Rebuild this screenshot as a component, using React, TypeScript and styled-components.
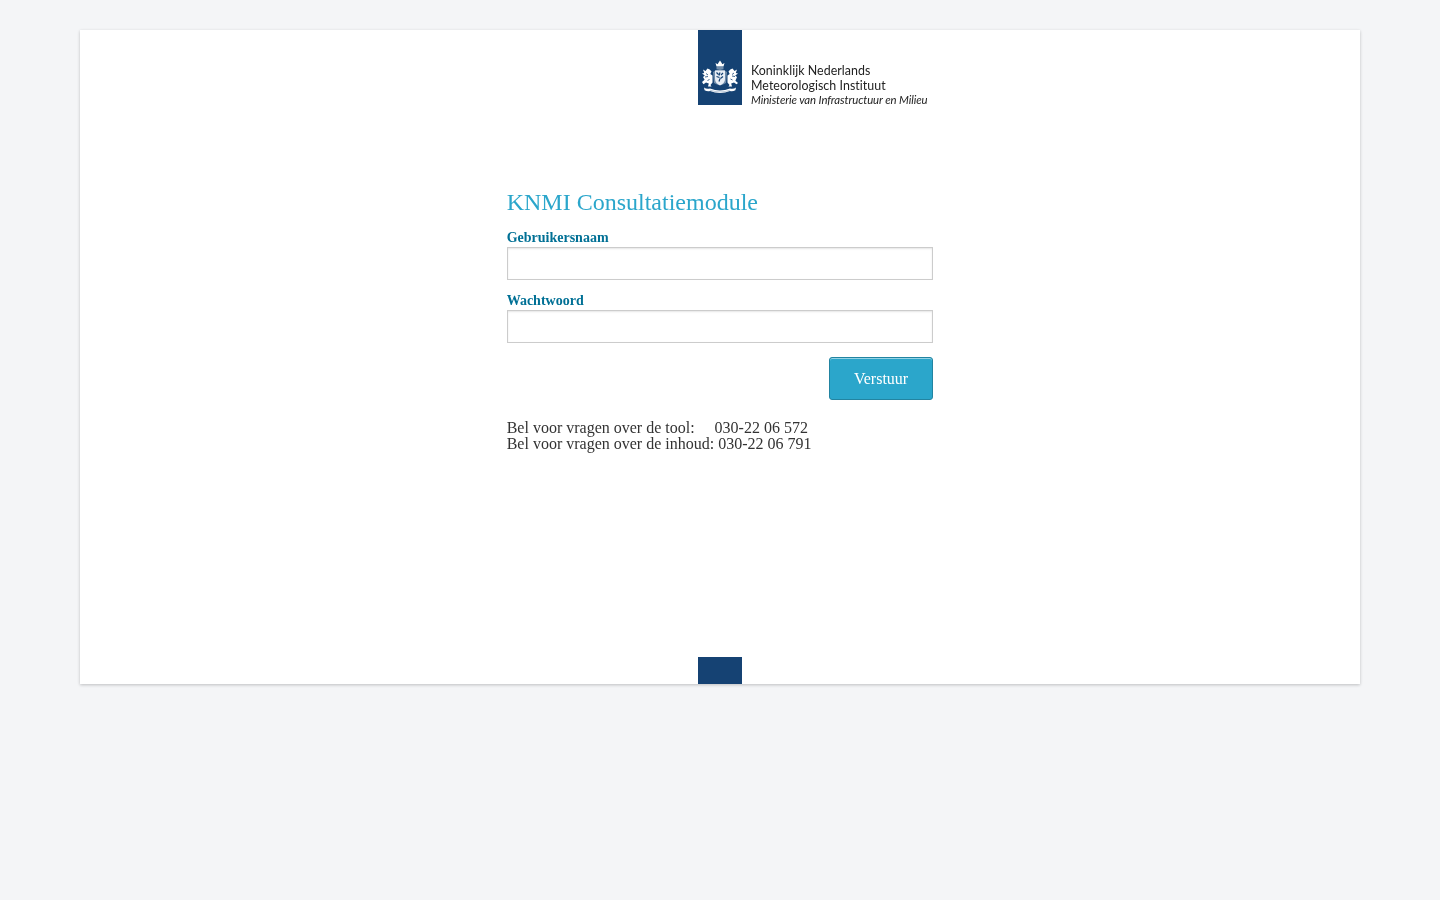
import React from "react";
import styled, { createGlobalStyle } from "styled-components";

const Global = createGlobalStyle`
  html, body { margin: 0; padding: 0; background: #f4f5f7; }
  body { font-family: "Liberation Serif", "Times New Roman", serif; color: #333; }
  * { box-sizing: border-box; }
`;

const Page = styled.div`
  min-height: 900px;
  padding: 30px 80px 0;
`;

const Card = styled.main`
  height: 654px;
  background: #fff;
  box-shadow: 0 1px 3px rgba(0, 0, 0, 0.22);
  display: flex;
  flex-direction: column;
  align-items: center;
`;

const Header = styled.header`
  align-self: stretch;
  height: 75px;
  padding-left: 618px;
  display: flex;
`;

const Ribbon = styled.div`
  width: 44px;
  height: 75px;
  background: #154273;
  display: flex;
  align-items: flex-end;
  justify-content: center;
  padding-bottom: 12px;
  flex: none;
`;

const Wordmark = styled.div`
  margin-left: 9px;
  padding-top: 33px;
  font-family: Lato, "Noto Sans", sans-serif;
  line-height: 15px;
  color: #222;
  white-space: nowrap;
  will-change: opacity;
`;

const WordLine = styled.div<{ $italic?: boolean }>`
  font-style: ${(p) => (p.$italic ? "italic" : "normal")};
  font-size: ${(p) => (p.$italic ? "11.4px" : "12.4px")};
  letter-spacing: ${(p) => (p.$italic ? "-0.1px" : "0.05px")};
  margin-top: ${(p) => (p.$italic ? "-1px" : "0")};
`;

const Form = styled.form`
  width: 33.3333%;
  margin-top: 83px;
  display: flex;
  flex-direction: column;
  will-change: opacity;
`;

const Title = styled.h1`
  margin: 0 0 11px;
  font-size: 24px;
  line-height: 29px;
  font-weight: 400;
  color: #2ba6cb;
`;

const Field = styled.label`
  display: block;
  margin-bottom: 11px;
`;

const LabelText = styled.span`
  display: block;
  height: 19px;
  font-size: 14px;
  line-height: 19px;
  font-weight: 700;
  color: #007095;
`;

const Input = styled.input`
  display: block;
  width: 100%;
  height: 33px;
  padding: 7px;
  border: 1px solid #ccc;
  background: #fff;
  box-shadow: inset 0 1px 2px rgba(0, 0, 0, 0.1);
  border-radius: 0;
  font: 14px "Liberation Serif", serif;
  outline: none;
`;

const Actions = styled.div`
  display: flex;
  justify-content: flex-end;
  margin-top: 3px;
`;

const Button = styled.button`
  width: 104.5px;
  height: 43px;
  padding: 0;
  background: #2ba6cb;
  border: 1px solid #2284a1;
  border-radius: 3px;
  box-shadow: inset 0 1px 0 rgba(255, 255, 255, 0.5);
  color: #fff;
  font: 16px "Liberation Serif", serif;
`;

const Contact = styled.div`
  margin-top: 20px;
  font-size: 16px;
  line-height: 16px;
  white-space: pre;
  color: #333;
`;

const FooterRibbon = styled.div`
  margin-top: auto;
  width: 44px;
  height: 27px;
  background: #154273;
  flex: none;
`;

const Crest = () => (
  <svg width="38" height="33" viewBox="0 0 38 33" fill="none" aria-hidden="true">
    <path d="M15.500 6.500 L14.500 3 L16.600 4.200 L17.800 2.200 L19 .6 L20.200 2.200 L21.400 4.200 L23.500 3 L22.500 6.500 Z" fill="#fff" />
    <path d="M15.500 7.500h7v1h-7z" fill="#cfd9e5" />
    <path d="M12 12 Q19 6 26 12 L25 23 Q19 27 13 23 Z" fill="#c9d5e2" opacity=".5" />
    <path d="M14 10.500h10v8.500q0 4-5 6.500q-5-2.500-5-6.500z" fill="#e8eef5" />
    <path d="M15.500 12.500l2 2m1.500-2l-1 3m4-2.500l-2 2m-4.500 1.500l3 1m1 1l2.500-2m-4 5l1-3" stroke="#154273" strokeWidth="1.200" />
    <path d="M2 9.500l2.500 1.500 2-2.500 2.200 1 1.800 2-1.200 2.500 2.200 1.500v7l-2 2.500 1 1.500H7l.8-3-2.800-1-2.500 1.800L1 22l2.600-2.200L2 17l1.800-1.600L1 13.500l2.200-.6z" fill="#fff" />
    <path d="M36 9.500l-2.500 1.500-2-2.500-2.200 1-1.800 2 1.200 2.500-2.200 1.500v7l2 2.500-1 1.500H31l-.8-3 2.800-1 2.500 1.800 1.500-1.300-2.600-2.200L36 17l-1.800-1.600 2.800-1.900-2.200-.6z" fill="#fff" />
    <path d="M5 13.500l2 1.500m-3 2l3-.5m1.500 3l-2 1m26.500-7.500l-2 1.500m3 2l-3-.5m-1.500 3l2 1" stroke="#154273" strokeWidth=".8" />
    <path d="M3 27.500q2.500 2 6 1 5 2 10 2t10-2q3.500 1 6-1l-.6 2.800q-2.800 1.400-5.400.7-5 2-10 2t-10-2q-2.600.7-5.400-.7z" fill="#fff" />
    <path d="M9 30.200q5 1.700 10 1.700t10-1.700" stroke="#7f9ab8" strokeWidth=".5" />
  </svg>
);

export default function App() {
  return (
    <>
      <Global />
      <Page>
        <Card>
          <Header>
            <Ribbon>
              <Crest />
            </Ribbon>
            <Wordmark>
              <WordLine>Koninklijk Nederlands</WordLine>
              <WordLine>Meteorologisch Instituut</WordLine>
              <WordLine $italic>Ministerie van Infrastructuur en Milieu</WordLine>
            </Wordmark>
          </Header>
          <Form onSubmit={(e) => e.preventDefault()}>
            <Title>KNMI Consultatiemodule</Title>
            <Field>
              <LabelText>Gebruikersnaam</LabelText>
              <Input type="text" />
            </Field>
            <Field>
              <LabelText>Wachtwoord</LabelText>
              <Input type="password" />
            </Field>
            <Actions>
              <Button type="submit">Verstuur</Button>
            </Actions>
            <Contact>
              <div>{"Bel voor vragen over de tool:     030-22 06 572"}</div>
              <div>Bel voor vragen over de inhoud: 030-22 06 791</div>
            </Contact>
          </Form>
          <FooterRibbon />
        </Card>
      </Page>
    </>
  );
}
